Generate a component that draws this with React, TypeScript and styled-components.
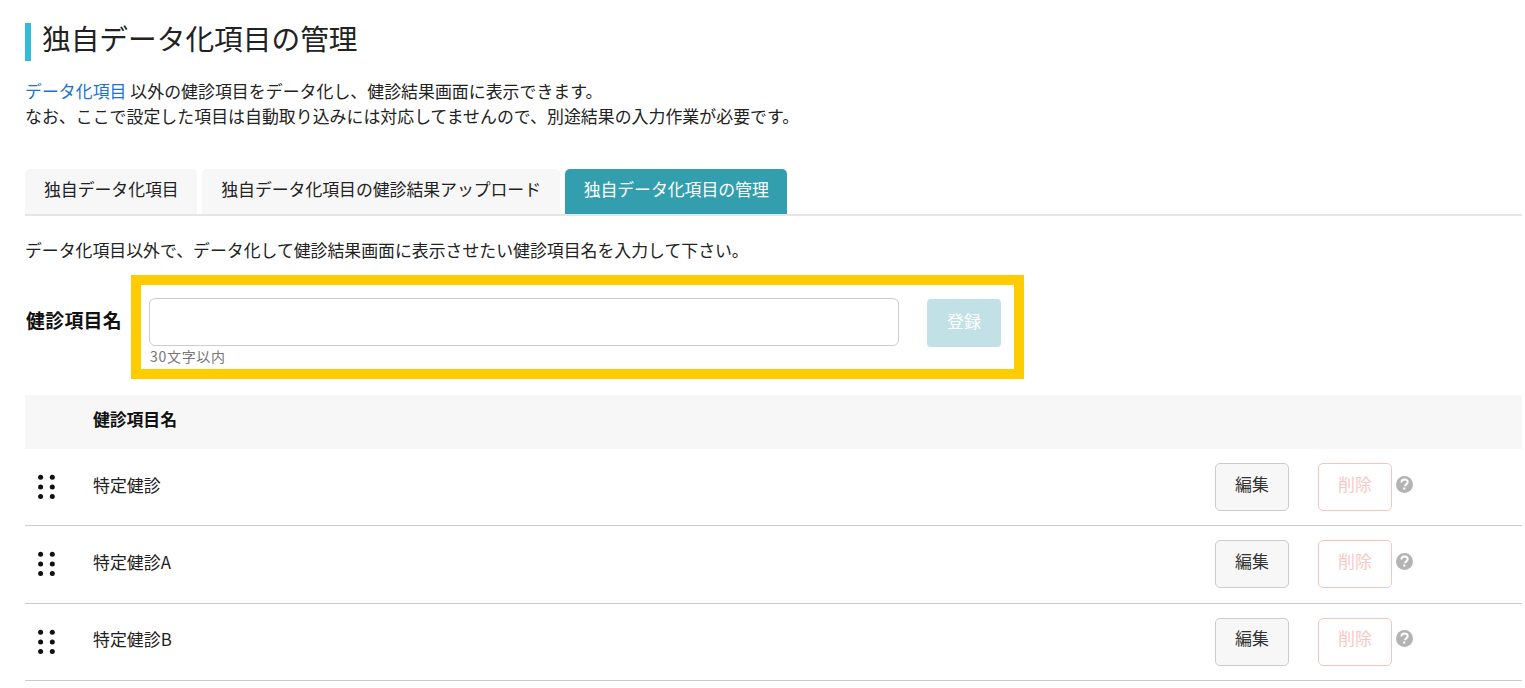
import React from "react";
import styled, { createGlobalStyle } from "styled-components";

const Global = createGlobalStyle`
  html, body { margin: 0; padding: 0; background: #fff; }
  body {
    font-family: "Noto Sans CJK JP", "Liberation Sans", sans-serif;
    color: #222;
    font-size: 16.9px;
    letter-spacing: 0.03px;
  }
`;

const Page = styled.div`
  height: 688px;
  overflow: hidden;
  padding: 23px 3px 0 25px;
  box-sizing: border-box;
`;

const Title = styled.h1`
  margin: 0;
  height: 38px;
  border-left: 6px solid #33bcd8;
  padding-left: 11px;
  font-size: 28.7px;
  font-weight: 400;
  line-height: 29px;
  letter-spacing: 0;
  color: #222;
`;

const Intro = styled.p`
  margin: 17px 0 0;
  line-height: 25px;
`;

const InfoLink = styled.a`
  color: #1a73d4;
  text-decoration: none;
`;

const Tabs = styled.div`
  display: flex;
  gap: 5px;
  margin-top: 41px;
  height: 47px;
  border-bottom: 2px solid #e5e5e5;
  box-sizing: border-box;
`;

const Tab = styled.div<{ $active?: boolean }>`
  padding: 0 18.6px 0 19px;
  height: 45px;
  line-height: 39px;
  letter-spacing: -0.06px;
  border-radius: 5px 5px 0 0;
  background: ${(p) => (p.$active ? "#339eae" : "#f7f7f7")};
  color: ${(p) => (p.$active ? "#fff" : "#222")};
`;

const Lead = styled.p`
  margin: 21px 0 0;
  line-height: 25px;
  letter-spacing: -0.02px;
`;

const FormRow = styled.div`
  display: flex;
  align-items: flex-start;
  margin-top: 13px;
`;

const FieldLabel = styled.label`
  width: 106px;
  font-size: 18.9px;
  font-weight: 700;
  line-height: 28px;
  padding-top: 31px;
  letter-spacing: 0.3px;
  color: #111;
  text-indent: 1px;
`;

const Highlight = styled.div`
  width: 893px;
  height: 104px;
  box-sizing: border-box;
  border: 10px solid #ffcc00;
  padding: 13px 13px 0 8px;
  display: flex;
  align-items: flex-start;
`;

const FieldColumn = styled.div`
  width: 750px;
  margin-right: 28px;
`;

const TextInput = styled.input`
  display: block;
  width: 100%;
  height: 48px;
  box-sizing: border-box;
  border: 1px solid #ccc;
  border-radius: 6px;
  background: #fff;
  outline: none;
`;

const Hint = styled.div`
  font-size: 14px;
  line-height: 20px;
  letter-spacing: 0.7px;
  color: #777;
  margin: 0 0 0 1px;
`;

const SubmitButton = styled.button`
  width: 74px;
  height: 48px;
  margin-top: 1px;
  border: 0;
  border-radius: 4px;
  background: #c2e1e6;
  color: #fff;
  font: inherit;
  padding: 0 0 6px;
`;

const TableHead = styled.div`
  margin-top: 16px;
  height: 54px;
  background: #f7f7f7;
  padding-left: 68px;
  line-height: 48px;
  font-weight: 700;
  letter-spacing: -0.1px;
  color: #111;
`;

const Row = styled.div`
  height: 77.33px;
  box-sizing: border-box;
  border-bottom: 1px solid #ccc;
  display: flex;
  align-items: center;
`;

const Handle = styled.svg`
  width: 68px;
  height: 28px;
  flex: none;
`;

const RowName = styled.div`
  flex: 1;
  padding-bottom: 6px;
`;

const BaseButton = styled.button`
  width: 74px;
  height: 48px;
  box-sizing: border-box;
  border-radius: 5px;
  font: inherit;
  padding: 0 0 8px;
`;

const EditButton = styled(BaseButton)`
  border: 1px solid #ccc;
  background: #f7f7f7;
  color: #333;
`;

const DeleteButton = styled(BaseButton)`
  margin-left: 29px;
  border: 1px solid #f8c4bf;
  background: #fff;
  color: #f8c8c4;
`;

const HelpIcon = styled.svg`
  width: 17px;
  height: 17px;
  margin: 0 109px 6px 4px;
  flex: none;
`;

const GripIcon = () => (
  <Handle viewBox="0 0 68 28" aria-hidden="true">
    {[4.3, 14, 23.5].flatMap((y) =>
      [15.6, 27.3].map((x) => <circle key={`${x}-${y}`} cx={x} cy={y} r={2.5} fill="#111" />)
    )}
  </Handle>
);

const Help = () => (
  <HelpIcon viewBox="0 0 17 17" aria-hidden="true">
    <circle cx="8.5" cy="8.5" r="8.5" fill="#b3b3b3" />
    <path
      d="M5.4 6.5c0-1.8 1.3-2.9 3.2-2.9s3.1 1.1 3.1 2.5c0 1.2-.7 1.8-1.5 2.3-.7.5-1 .8-1 1.8"
      fill="none"
      stroke="#fff"
      strokeWidth="2"
    />
    <rect x="7.2" y="11.5" width="2.1" height="2.1" fill="#fff" />
  </HelpIcon>
);

const items = ["特定健診", "特定健診A", "特定健診B"];

export default function App() {
  return (
    <Page>
      <Global />
      <Title>独自データ化項目の管理</Title>
      <Intro>
        <InfoLink href="#">データ化項目</InfoLink> 以外の健診項目をデータ化し、健診結果画面に表示できます。
        <br />
        なお、ここで設定した項目は自動取り込みには対応してませんので、別途結果の入力作業が必要です。
      </Intro>
      <Tabs>
        <Tab>独自データ化項目</Tab>
        <Tab>独自データ化項目の健診結果アップロード</Tab>
        <Tab $active>独自データ化項目の管理</Tab>
      </Tabs>
      <Lead>データ化項目以外で、データ化して健診結果画面に表示させたい健診項目名を入力して下さい。</Lead>
      <FormRow>
        <FieldLabel>健診項目名</FieldLabel>
        <Highlight>
          <FieldColumn>
            <TextInput />
            <Hint>30文字以内</Hint>
          </FieldColumn>
          <SubmitButton>登録</SubmitButton>
        </Highlight>
      </FormRow>
      <TableHead>健診項目名</TableHead>
      {items.map((name) => (
        <Row key={name}>
          <GripIcon />
          <RowName>{name}</RowName>
          <EditButton>編集</EditButton>
          <DeleteButton>削除</DeleteButton>
          <Help />
        </Row>
      ))}
    </Page>
  );
}
